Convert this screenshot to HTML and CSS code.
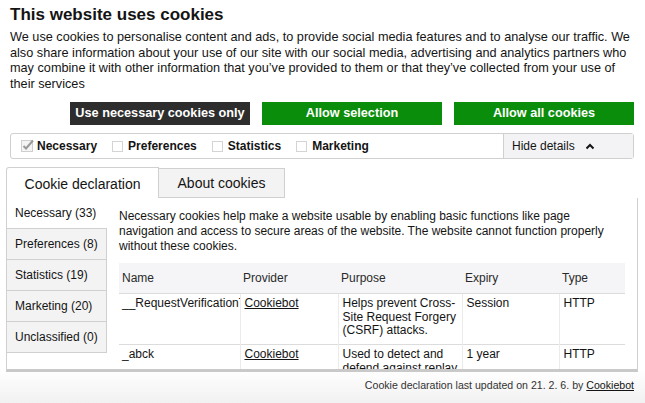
FILE: index.html
```html
<!DOCTYPE html>
<html>
<head>
<meta charset="utf-8">
<link rel="stylesheet" href="styles.css">
</head>
<body>
<div class="dialog">
  <div class="intro">
    <h1 class="title">This website uses cookies</h1>
    <p class="lead">We use cookies to personalise content and ads, to provide social media features and to analyse our traffic. We also share information about your use of our site with our social media, advertising and analytics partners who may combine it with other information that you’ve provided to them or that they’ve collected from your use of their services</p>
  </div>
  <div class="actions">
    <div class="btn btn-dark">Use necessary cookies only</div>
    <div class="btn btn-green">Allow selection</div>
    <div class="btn btn-green">Allow all cookies</div>
  </div>
  <div class="levels">
    <div class="level">
      <svg class="cb" width="12" height="13" viewBox="0 0 12 13"><rect x="0.5" y="1.5" width="11" height="11" fill="#f4f4f4" stroke="#cfcfcf"/><polyline points="2.5,7 5,9.5 12,1.5" fill="none" stroke="#9a9a9a" stroke-width="2"/></svg>
      <span>Necessary</span>
    </div>
    <div class="level">
      <span class="box"></span><span>Preferences</span>
    </div>
    <div class="level">
      <span class="box"></span><span>Statistics</span>
    </div>
    <div class="level">
      <span class="box"></span><span>Marketing</span>
    </div>
    <div class="details">
      <span>Hide details</span>
      <svg width="10" height="7" viewBox="0 0 10 7"><polyline points="1.5,5.5 5,2 8.5,5.5" fill="none" stroke="#141414" stroke-width="2"/></svg>
    </div>
  </div>
  <div class="tabs">
    <div class="tab active">Cookie declaration</div>
    <div class="tab">About cookies</div>
  </div>
  <div class="panel">
    <div class="nav">
      <div class="nav-item active">Necessary (33)</div>
      <div class="nav-item">Preferences (8)</div>
      <div class="nav-item">Statistics (19)</div>
      <div class="nav-item">Marketing (20)</div>
      <div class="nav-item">Unclassified (0)</div>
    </div>
    <div class="content">
      <p class="desc">Necessary cookies help make a website usable by enabling basic functions like page navigation and access to secure areas of the website. The website cannot function properly without these cookies.</p>
      <table class="tbl">
        <thead>
          <tr><th class="c1">Name</th><th class="c2">Provider</th><th class="c3">Purpose</th><th class="c4">Expiry</th><th class="c5">Type</th></tr>
        </thead>
        <tbody>
          <tr class="r1"><td class="name">__RequestVerificationToken</td><td><a>Cookiebot</a></td><td>Helps prevent Cross-Site Request Forgery (CSRF) attacks.</td><td>Session</td><td>HTTP</td></tr>
          <tr><td class="name">_abck</td><td><a>Cookiebot</a></td><td>Used to detect and defend against replay attacks.</td><td>1 year</td><td>HTTP</td></tr>
        </tbody>
      </table>
    </div>
  </div>
  <div class="footer">Cookie declaration last updated on 21. 2. 6. by <a>Cookiebot</a></div>
</div>
</body>
</html>
```
FILE: styles.css
```css
html, body {
  margin: 0;
  padding: 0;
}
body {
  width: 645px;
  height: 403px;
  overflow: hidden;
  font-family: "Liberation Sans", Arial, sans-serif;
  color: #141414;
  background: linear-gradient(to bottom, #ffffff 0, #ffffff 370px, #f1f1f1 403px);
}
.dialog {
  width: 645px;
}
.intro {
  padding: 4px 11px 0 10px;
}
.title {
  margin: 0;
  font-size: 17px;
  line-height: 22px;
  font-weight: bold;
}
.lead {
  margin: 4px 0 0;
  font-size: 12.7px;
  line-height: 15.6px;
}
.actions {
  display: flex;
  justify-content: flex-end;
  gap: 12px;
  padding-right: 11px;
  margin-top: 10px;
}
.btn {
  width: 180px;
  height: 23px;
  display: flex;
  align-items: center;
  justify-content: center;
  color: #fff;
  font-size: 12.7px;
  font-weight: bold;
  box-sizing: border-box;
  padding-bottom: 2px;
}
.btn-dark { background: #2d2d2d; }
.btn-green { background: #0a8d0a; }
.levels {
  margin: 8px 11px 0 10px;
  height: 26px;
  border: 1px solid #d0d0d0;
  border-radius: 3px;
  box-sizing: border-box;
  display: flex;
  align-items: stretch;
  font-size: 12px;
  font-weight: bold;
}
.level {
  display: flex;
  align-items: center;
  gap: 4px;
  padding-left: 10px;
}
.level + .level {
  padding-left: 15px;
}
.cb { margin-top: -2px; overflow: visible; }
.box {
  width: 11px;
  height: 11px;
  border: 1px solid #d4d4d4;
  box-sizing: border-box;
  background: #fff;
  margin-right: 1px;
}
.details {
  margin-left: auto;
  width: 130px;
  box-sizing: border-box;
  background: #f3f3f6;
  border-left: 1px solid #d0d0d0;
  display: flex;
  align-items: center;
  gap: 10px;
  padding-left: 8px;
  font-weight: normal;
}
.tabs {
  display: flex;
  margin: 8px 0 0 6px;
  height: 31px;
}
.tab {
  font-size: 14px;
  display: flex;
  align-items: center;
  justify-content: center;
  box-sizing: border-box;
  border: 1px solid #d0d0d0;
  border-bottom: none;
  background: #f3f3f3;
  margin-top: 1px;
}
.tab.active {
  width: 153px;
  background: #fff;
  margin-top: 0;
  border-radius: 3px 0 0 0;
  padding-top: 1px;
}
.tab:not(.active) {
  width: 126px;
  border-left: none;
  border-bottom: 1px solid #d0d0d0;
}
.panel {
  margin: 0 7px 0 6px;
  height: 174px;
  box-sizing: border-box;
  border-right: 1px solid #d0d0d0;
  border-left: 1px solid #d0d0d0;
  border-bottom: 3px solid #c9c9c9;
  display: flex;
  overflow: hidden;
  font-size: 12px;
}
.nav {
  width: 100px;
  flex: none;
  border-right: 1px solid #d0d0d0;
  align-self: flex-start;
  box-sizing: border-box;
}
.nav-item {
  height: 31px;
  display: flex;
  align-items: center;
  padding-left: 8px;
  background: #f3f3f3;
  border-bottom: 1px solid #d0d0d0;
  box-sizing: border-box;
}
.nav-item.active {
  background: #fff;
  margin-right: -1px;
}
.content {
  flex: 1;
  padding: 11px 12px 0 12px;
  min-width: 0;
}
.desc {
  margin: 0;
  line-height: 15px;
}
.tbl {
  margin-top: 9px;
  border-collapse: collapse;
  table-layout: fixed;
  width: 506px;
}
.tbl th {
  background: #f5f5f7;
  font-weight: normal;
  text-align: left;
  height: 30px;
  padding: 0 3px;
  color: #2a2a2a;
}
.c1 { width: 115px; }
.c2 { width: 92px; }
.c3 { width: 118px; }
.c4 { width: 91px; }
.tbl td {
  vertical-align: top;
  border-top: 1px solid #dcdcdc;
  padding: 3px 4px 5px;
  line-height: 13.5px;
}
.tbl td + td { border-left: 1px solid #ebebeb; }
.tbl td.name {
  white-space: nowrap;
  overflow: hidden;
  padding-left: 3px;
  padding-right: 0;
}
.tbl tr.r1 td { height: 42px; }
.tbl a, .footer a {
  text-decoration: underline;
  color: #141414;
}
.footer {
  text-align: right;
  font-size: 10.6px;
  padding: 7px 11px 0 0;
  color: #333;
}
```
